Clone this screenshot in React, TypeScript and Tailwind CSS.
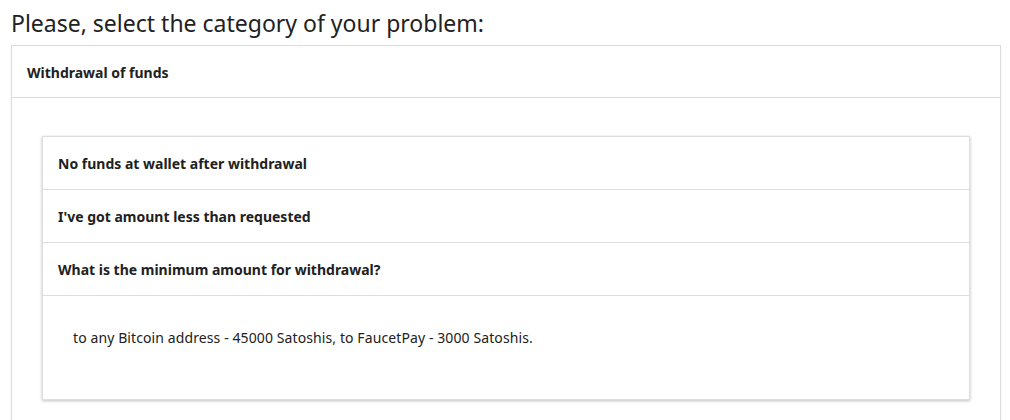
import React from "react";

const questions = [
  "No funds at wallet after withdrawal",
  "I've got amount less than requested",
  "What is the minimum amount for withdrawal?",
];

const App: React.FC = () => {
  return (
    <div className="h-[420px] overflow-hidden bg-white font-['Noto_Sans',sans-serif] text-[#212121]">
      <h1 className="pl-[11px] pt-[7px] text-[23px] leading-[32px] text-[#222]">
        Please, select the category of your problem:
      </h1>
      <div className="ml-[11px] mr-[9px] mt-[6px] border border-[#dcdcdc] shadow-[0_1px_2px_rgba(0,0,0,0.06)]">
        <div className="flex h-[52px] items-center border-b border-[#dcdcdc] px-[15px] pt-[1px] text-[14px] font-bold">
          Withdrawal of funds
        </div>
        <div className="px-[30px] pt-[38px] pb-[30px]">
          <div className="border border-[#dedede] shadow-[0_1px_3px_rgba(0,0,0,0.25)]">
            {questions.map((q) => (
              <div
                key={q}
                className="flex h-[53px] items-center border-b border-[#dedede] px-[15px] text-[14px] font-bold"
              >
                {q}
              </div>
            ))}
            <div className="h-[103px] px-[30px] pt-[32px] text-[14px] leading-[20px] tracking-[0.1px]">
              to any Bitcoin address - 45000 Satoshis, to FaucetPay - 3000 Satoshis.
            </div>
          </div>
        </div>
      </div>
    </div>
  );
};

export default App;
